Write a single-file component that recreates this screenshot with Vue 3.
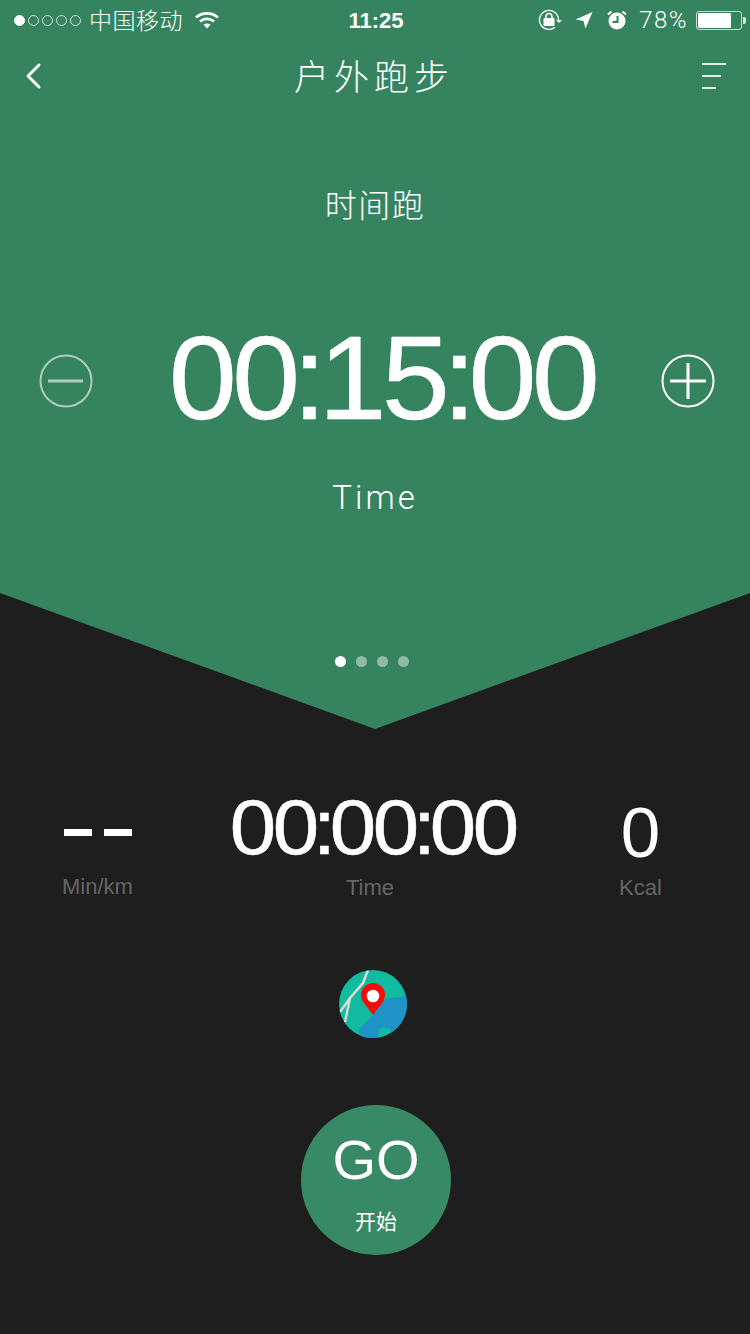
<template>
  <div class="page">
    <section class="hero">
      <div class="status-bar">
        <div class="status-left">
          <div class="signal">
            <i v-for="n in 5" :key="n" :class="{ on: n === 1 }"></i>
          </div>
          <span class="carrier">中国移动</span>
          <svg class="wifi" width="24" height="18" viewBox="0 0 24 18">
            <path d="M1 6.500C7 1 17 1 23 6.500" fill="none" stroke="#fff" stroke-width="2.600" />
            <path d="M5 10.500C9 7 15 7 19 10.500" fill="none" stroke="#fff" stroke-width="2.600" />
            <path d="M8.500 13.800C10.800 12 13.200 12 15.500 13.800L12 17.500Z" fill="#fff" />
          </svg>
        </div>
        <span class="clock">11:25</span>
        <div class="status-right">
          <svg width="24" height="22" viewBox="0 0 24 22">
            <path d="M20.500 11A9.500 9.500 0 1 0 17 18.300" fill="none" stroke="#fff" stroke-width="1.300" />
            <path d="M18 11h6l-3 3z" fill="#fff" />
            <rect x="5.500" y="9" width="11" height="8" rx="1" fill="#fff" />
            <path d="M8 9V7.500a3 3 0 0 1 6 0V9" fill="none" stroke="#fff" stroke-width="1.600" />
          </svg>
          <svg class="arrow" width="18" height="18" viewBox="0 0 18 18">
            <path d="M0.500 8.500L17.500 1 10.500 17.500 8.500 10Z" fill="#fff" />
          </svg>
          <svg class="alarm" width="20" height="20" viewBox="0 0 20 20">
            <circle cx="10" cy="11" r="8.500" fill="#fff" />
            <path d="M10.500 6v6H5.500" fill="none" stroke="#36845f" stroke-width="2" />
            <path d="M1 4.500L4.500 1.500M19 4.500L15.500 1.500" stroke="#fff" stroke-width="2" />
          </svg>
          <span class="percent">78%</span>
          <div class="battery">
            <div class="battery-level"></div>
          </div>
        </div>
      </div>

      <header class="nav">
        <svg width="20" height="28" viewBox="0 0 20 28">
          <path d="M16 3L5 14l11 11" fill="none" stroke="#fff" stroke-width="3" stroke-linecap="round" stroke-linejoin="round" />
        </svg>
        <h1>户外跑步</h1>
        <div class="menu">
          <i class="long"></i>
          <i class="mid"></i>
          <i class="short"></i>
        </div>
      </header>

      <p class="mode">时间跑</p>

      <div class="timer-row">
        <button class="round-btn minus">
          <svg width="54" height="54" viewBox="0 0 54 54">
            <circle cx="27" cy="27" r="25.500" fill="none" stroke="#fff" stroke-width="2" />
            <path d="M9 27h35" stroke="#fff" stroke-width="3" />
          </svg>
        </button>
        <div class="timer">0<span class="tight">0</span><span class="tight">:</span>1<span class="tight">5</span><span class="tight">:</span>00</div>
        <button class="round-btn">
          <svg width="54" height="54" viewBox="0 0 54 54">
            <circle cx="27" cy="27" r="25.500" fill="none" stroke="#fff" stroke-width="2" />
            <path d="M9 27h36M27 9v36" stroke="#fff" stroke-width="3" />
          </svg>
        </button>
      </div>

      <p class="timer-label">Time</p>

      <div class="pager">
        <i v-for="n in 4" :key="n" :class="{ on: n === 1 }"></i>
      </div>
    </section>

    <section class="stats">
      <div class="stat pace">
        <div class="dashes"><i></i><i></i></div>
        <span>Min/km</span>
      </div>
      <div class="stat">
        <div class="value big">0<b>0</b><b>:</b>0<b>0</b><b>:</b>00</div>
        <span>Time</span>
      </div>
      <div class="stat">
        <div class="value kcal">0</div>
        <span>Kcal</span>
      </div>
    </section>

    <div class="map-icon">
      <svg width="68" height="68" viewBox="0 0 68 68">
        <defs>
          <clipPath id="globe"><circle cx="34" cy="34" r="34" /></clipPath>
        </defs>
        <g clip-path="url(#globe)">
          <rect width="68" height="68" fill="#10bb9f" />
          <path d="M68 25L61 27 52 28 44 30 34 45 19 60 23 68 39 68 40 60 44 57 51 59 56 65 68 60Z" fill="#1f93c6" />
          <path d="M29 0L24 13 11 28 1 42M11 28L6 52" fill="none" stroke="#dcdcd4" stroke-width="2.500" />
        </g>
        <path d="M34 45C29 37 22 32 22 25a12 12 0 0 1 24 0C46 32 39 37 34 45Z" fill="#f80a0a" />
        <circle cx="34" cy="26" r="6.300" fill="#fff" />
      </svg>
    </div>

    <button class="go-btn">
      <span class="go">GO</span>
      <span class="go-sub">开始</span>
    </button>
  </div>
</template>

<script setup>
</script>

<style>
html,
body {
  background: #1e1e1e;
}
</style>

<style scoped>
.page {
  width: 750px;
  height: 1334px;
  overflow: hidden;
  background: #1e1e1e;
  color: #fff;
  font-family: "Liberation Sans", "Noto Sans CJK SC", sans-serif;
}

.hero {
  height: 729px;
  background: #36845f;
  clip-path: polygon(0 0, 100% 0, 100% 593px, 50% 100%, 0 593px);
  display: flex;
  flex-direction: column;
  box-sizing: border-box;
}

.status-bar {
  height: 40px;
  padding: 0 14px;
  display: grid;
  grid-template-columns: 1fr auto 1fr;
  align-items: center;
}

.status-left,
.status-right {
  display: flex;
  align-items: center;
}

.signal {
  display: flex;
  gap: 3px;
}

.signal i {
  width: 11px;
  height: 11px;
  box-sizing: border-box;
  border: 1px solid rgba(255, 255, 255, 0.75);
  border-radius: 50%;
}

.signal i.on {
  background: #fff;
  border-color: #fff;
}

.carrier {
  margin: -2px 0 0 8px;
  font-size: 23px;
  font-weight: 300;
  letter-spacing: 0.500px;
}

.wifi {
  margin-left: 12px;
}

.clock {
  margin: 2px 0 0 2px;
  font-size: 22px;
  font-weight: 700;
}

.status-right {
  justify-content: flex-end;
  margin-right: -6px;
}

.arrow {
  margin-left: 13px;
}

.alarm {
  margin-left: 14px;
}

.percent {
  margin-left: 12px;
  font-family: Roboto, "Liberation Sans", sans-serif;
  font-size: 24px;
  font-weight: 300;
  letter-spacing: 1.500px;
}

.battery {
  position: relative;
  margin-left: 8px;
  width: 46px;
  height: 19px;
  box-sizing: border-box;
  border: 1px solid rgba(255, 255, 255, 0.7);
  border-radius: 3px;
  padding: 1px;
}

.battery::after {
  content: "";
  position: absolute;
  right: -5px;
  top: 5px;
  width: 3px;
  height: 7px;
  background: rgba(255, 255, 255, 0.8);
  border-radius: 0 2px 2px 0;
}

.battery-level {
  width: 78%;
  height: 100%;
  background: #fff;
  border-radius: 1px;
}

.nav {
  height: 72px;
  padding: 0 23px;
  display: flex;
  align-items: center;
  justify-content: space-between;
}

.nav h1 {
  margin: -4px 0 0 3px;
  font-size: 35px;
  font-weight: 300;
  letter-spacing: 5px;
}

.menu {
  width: 25px;
  display: flex;
  flex-direction: column;
  gap: 10px;
}

.menu i {
  display: block;
  height: 2px;
  background: rgba(255, 255, 255, 0.85);
}

.menu .long {
  width: 24px;
}

.menu .mid {
  width: 19px;
}

.menu .short {
  width: 14px;
}

.mode {
  margin: 71px 0 0;
  text-align: center;
  font-size: 32px;
  line-height: 46px;
  font-weight: 300;
  letter-spacing: 1.500px;
}

.timer-row {
  margin-top: 87px;
  padding: 0 35px 0 39px;
  height: 130px;
  display: flex;
  align-items: center;
  justify-content: space-between;
}

.round-btn {
  padding: 0;
  width: 54px;
  height: 54px;
  border: 0;
  background: none;
  display: block;
}

.round-btn svg {
  display: block;
}

.minus {
  opacity: 0.6;
}

.timer {
  margin-left: 10px;
  padding-bottom: 7px;
  font-size: 119px;
  line-height: 130px;
  letter-spacing: -4.800px;
  white-space: nowrap;
  -webkit-text-stroke: 0.500px #fff;
  transform: scaleX(1.03);
}

.tight {
  letter-spacing: -7.600px;
}

.timer-label {
  margin: 32px 0 0;
  text-align: center;
  font-family: Roboto, "Liberation Sans", sans-serif;
  font-size: 33px;
  line-height: 40px;
  font-weight: 300;
  letter-spacing: 3px;
}

.pager {
  margin-top: 138px;
  padding-right: 7px;
  display: flex;
  justify-content: center;
  gap: 10px;
}

.pager i {
  width: 11px;
  height: 11px;
  border-radius: 50%;
  background: rgba(255, 255, 255, 0.45);
}

.pager i.on {
  background: #fff;
}

.stats {
  margin-top: 53px;
  height: 119px;
  padding-right: 14px;
  display: grid;
  grid-template-columns: 195px 350px 1fr;
  align-items: end;
  text-align: center;
}

.stat span {
  display: block;
  font-size: 22px;
  line-height: 26px;
  color: #666;
}

.pace span {
  margin-bottom: 1px;
}

.value {
  white-space: nowrap;
}

.big {
  margin-bottom: 3px;
  padding-left: 5px;
  font-size: 78px;
  line-height: 90px;
  letter-spacing: -3.200px;
  -webkit-text-stroke: 0.500px #fff;
  transform: scaleX(1.07);
}

.big b {
  font-weight: 400;
  letter-spacing: -5.900px;
}

.kcal {
  font-size: 71px;
  line-height: 84px;
}

.dashes {
  display: flex;
  justify-content: center;
  gap: 12px;
  margin-bottom: 38px;
}

.dashes i {
  width: 28px;
  height: 7px;
  background: #fff;
}

.map-icon {
  margin-top: 69px;
  display: flex;
  justify-content: center;
}

.map-icon svg {
  display: block;
  margin-left: -4px;
}

.go-btn {
  display: flex;
  flex-direction: column;
  align-items: center;
  margin: 67px auto 0;
  padding: 22px 0 0;
  width: 150px;
  height: 150px;
  border: 0;
  border-radius: 50%;
  background: #388966;
  color: #fff;
  font-family: inherit;
  position: relative;
  left: 1px;
}

.go {
  font-size: 56px;
  line-height: 66px;
}

.go-sub {
  margin-top: 14px;
  font-size: 21px;
  line-height: 30px;
}
</style>
